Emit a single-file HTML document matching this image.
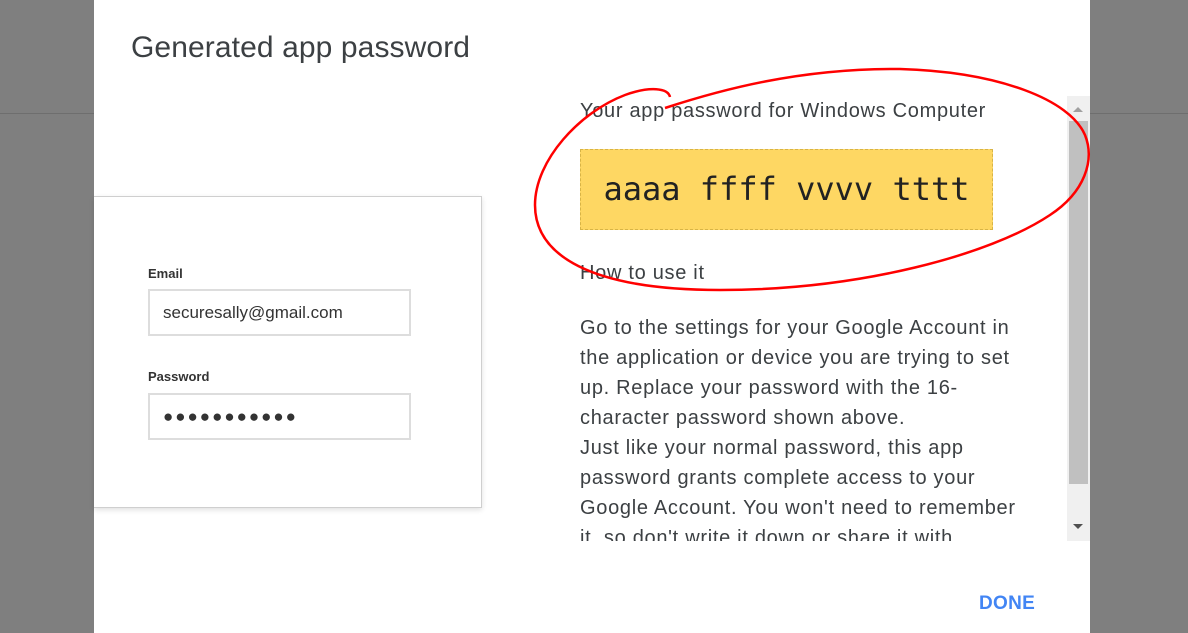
<!DOCTYPE html>
<html><head><meta charset="utf-8"><style>
*{margin:0;padding:0;box-sizing:border-box}
body{width:1188px;height:633px;overflow:hidden;background:#7f7f7f;font-family:"Liberation Sans",sans-serif;position:relative}
.line{position:absolute;left:0;right:0;top:113px;height:1px;background:#6e6e6e}
.modal{position:absolute;left:94px;top:0;width:996px;height:633px;background:#fff}
.title{position:absolute;left:37px;top:31px;font-size:30px;color:#3c4043;letter-spacing:0.1px;white-space:nowrap}
.card{position:absolute;left:0;top:196px;width:388px;height:312px;border:1px solid #cfcfcf;border-left:none;box-shadow:0 2px 5px rgba(0,0,0,.12);background:#fff}
.lbl{position:absolute;left:54px;font-size:13px;font-weight:bold;color:#333}
.inp{position:absolute;left:54px;width:263px;height:47px;border:2px solid #ddd;font-size:17px;color:#333;padding:12px 13px}
.dots{letter-spacing:2px;font-size:17px}
.sub{position:absolute;left:486px;font-size:20px;letter-spacing:0.7px;color:#3c4043;white-space:nowrap}
.pw{position:absolute;left:486px;top:149px;width:413px;height:81px;background:#fed763;border:1px dashed #d8b446;font-family:"DejaVu Sans Mono","Liberation Mono",monospace;font-size:32px;color:#222;text-align:center;line-height:79px}
.body{position:absolute;left:486px;top:313px;width:470px;height:228px;overflow:hidden;font-size:20px;letter-spacing:0.7px;line-height:30px;color:#3c4043;white-space:nowrap}
.sb{position:absolute;left:973px;top:96px;width:23px;height:445px;background:#f0f0f0}
.thumb{position:absolute;left:2px;top:25px;width:19px;height:363px;background:#c0c0c0}
.up{position:absolute;left:6px;top:11px;border-left:5px solid transparent;border-right:5px solid transparent;border-bottom:5px solid #a0a0a0}
.dn{position:absolute;left:6px;top:428px;border-left:5px solid transparent;border-right:5px solid transparent;border-top:5px solid #505050}
.done{position:absolute;left:885px;top:593px;font-size:19px;font-weight:bold;color:#4285f4;letter-spacing:0.3px}
svg{position:absolute;left:0;top:0}
</style></head><body>
<div class="line"></div>
<div class="modal">
<div class="title">Generated app password</div>
<div class="card">
<div class="lbl" style="top:69px">Email</div>
<div class="inp" style="top:92px">securesally@gmail.com</div>
<div class="lbl" style="top:172px">Password</div>
<div class="inp dots" style="top:196px">●●●●●●●●●●●</div>
</div>
<div class="sub" style="top:100px">Your app password for Windows Computer</div>
<div class="pw">aaaa ffff vvvv tttt</div>
<div class="sub" style="top:262px">How to use it</div>
<div class="body">Go to the settings for your Google Account in<br>the application or device you are trying to set<br>up. Replace your password with the 16-<br>character password shown above.<br>Just like your normal password, this app<br>password grants complete access to your<br>Google Account. You won't need to remember<br>it, so don't write it down or share it with</div>
<div class="sb"><div class="up"></div><div class="thumb"></div><div class="dn"></div></div>
<div class="done">DONE</div>
</div>
<svg width="1188" height="633"><path d="M670,97 C668,88 650,86 625,95 C580,112 535,160 535,205 C535,255 590,290 720,290 C860,290 990,255 1050,215 C1085,192 1095,160 1085,135 C1070,100 1000,72 900,69 C800,68 720,90 665,108" fill="none" stroke="#f00" stroke-width="2.5"/></svg>
</body></html>
